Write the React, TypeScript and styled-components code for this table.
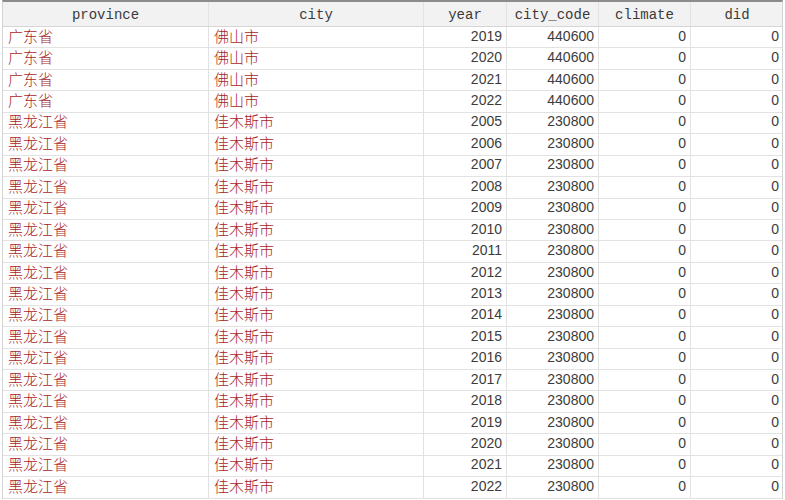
import React from "react";
import styled, { createGlobalStyle } from "styled-components";

const Global = createGlobalStyle`
  html, body { margin: 0; padding: 0; background: #ffffff; }
  body { width: 785px; height: 500px; overflow: hidden; }
`;

const COLS = "206px 215px 83px 92px 92px 92px";

const Sheet = styled.div`
  margin-left: 2px;
  width: 781px;
  border-top: 2px solid #8c8c8c;
  border-left: 1px solid #d4d4d4;
  border-right: 1px solid #d4d4d4;
  box-sizing: border-box;
`;

const HeaderRow = styled.div`
  display: grid;
  grid-template-columns: ${COLS};
  height: 24px;
  background: #f2f2f2;
  border-bottom: 1px solid #d6d6d6;
`;

const HeadCell = styled.div<{ $last?: boolean }>`
  display: flex;
  align-items: center;
  justify-content: center;
  font-family: "Liberation Mono", "DejaVu Sans Mono", monospace;
  font-size: 14px;
  color: #3a3a3a;
  border-right: ${(p) => (p.$last ? "none" : "1px solid #e2e2e2")};
  padding-top: 1px;
`;

const Row = styled.div`
  display: grid;
  grid-template-columns: ${COLS};
  height: 21.45px;
  border-bottom: 1px solid #e2e2e2;
  box-sizing: border-box;
`;

const Cell = styled.div<{ $num?: boolean; $last?: boolean }>`
  display: flex;
  align-items: center;
  justify-content: ${(p) => (p.$num ? "flex-end" : "flex-start")};
  padding: ${(p) => (p.$num ? "0 4px 3px 0" : "0 0 3px 5px")};
  line-height: 16px;
  border-right: ${(p) => (p.$last ? "none" : "1px solid #e2e2e2")};
  font-family: ${(p) =>
    p.$num
      ? `"Liberation Sans", Arial, sans-serif`
      : `"Noto Sans CJK SC", sans-serif`};
  font-weight: ${(p) => (p.$num ? 400 : 300)};
  font-size: ${(p) => (p.$num ? "14px" : "15px")};
  color: ${(p) => (p.$num ? "#3c3c3c" : "#a81d1d")};
  white-space: nowrap;
`;

type R = [string, string, number, number];

const rows: R[] = [
  ["广东省", "佛山市", 2019, 440600],
  ["广东省", "佛山市", 2020, 440600],
  ["广东省", "佛山市", 2021, 440600],
  ["广东省", "佛山市", 2022, 440600],
  ...Array.from({ length: 18 }, (_, i): R => ["黑龙江省", "佳木斯市", 2005 + i, 230800]),
];

const headers = ["province", "city", "year", "city_code", "climate", "did"];

export default function App() {
  return (
    <>
      <Global />
      <Sheet>
        <HeaderRow>
          {headers.map((h, i) => (
            <HeadCell key={h} $last={i === headers.length - 1}>
              {h}
            </HeadCell>
          ))}
        </HeaderRow>
        {rows.map((r, i) => (
          <Row key={i}>
            <Cell>{r[0]}</Cell>
            <Cell>{r[1]}</Cell>
            <Cell $num>{r[2]}</Cell>
            <Cell $num>{r[3]}</Cell>
            <Cell $num>0</Cell>
            <Cell $num $last>0</Cell>
          </Row>
        ))}
      </Sheet>
    </>
  );
}
